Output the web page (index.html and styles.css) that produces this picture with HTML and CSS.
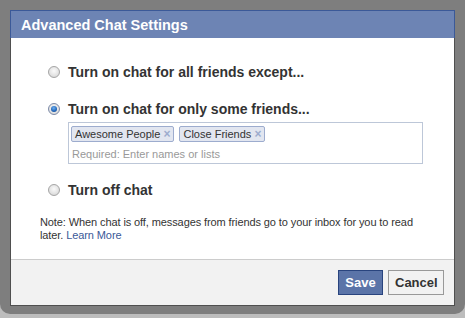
FILE: index.html
```html
<!DOCTYPE html>
<html lang="en">
<head>
    <meta charset="UTF-8">
    <title>Advanced Chat Settings</title>
    <link rel="stylesheet" href="styles.css">
</head>
<body>
    <div class="frame">
        <div class="dialog">
            <div class="dialog-header">Advanced Chat Settings</div>
            <div class="dialog-body">
                <div class="option">
                    <span class="radio"></span>
                    <span class="option-label">Turn on chat for all friends except...</span>
                </div>
                <div class="option option-selected">
                    <span class="radio radio-on"></span>
                    <span class="option-label">Turn on chat for only some friends...</span>
                </div>
                <div class="token-box">
                    <div class="tokens">
                        <span class="token">Awesome People <span class="token-x">&#215;</span></span>
                        <span class="token">Close Friends <span class="token-x">&#215;</span></span>
                    </div>
                    <div class="token-input">Required: Enter names or lists</div>
                </div>
                <div class="option option-last">
                    <span class="radio"></span>
                    <span class="option-label">Turn off chat</span>
                </div>
                <p class="note">Note: When chat is off, messages from friends go to your inbox for you to read later. <a href="#">Learn More</a></p>
            </div>
            <div class="dialog-footer">
                <button class="btn btn-save">Save</button>
                <button class="btn btn-cancel">Cancel</button>
            </div>
        </div>
    </div>
</body>
</html>
```

FILE: styles.css
```css
body {
    margin: 0;
    padding: 0;
    background-color: #bdbdbd;
    font-family: "Liberation Sans", Arial, sans-serif;
    color: #333;
}
.frame {
    width: 465px;
    height: 314px;
    box-sizing: border-box;
    padding: 10px 10px 8px 10px;
    background-color: #7e7e7e;
    border-radius: 0 0 10px 10px;
}
.dialog {
    background: white;
    border: 1px solid #4f4f4f;
    border-top: 0;
    width: 445px;
    height: 296px;
    box-sizing: border-box;
    display: flex;
    flex-direction: column;
}
.dialog-header {
    background-color: #6d84b4;
    border: 1px solid #3b5998;
    border-bottom: 0;
    margin: 0 -1px;
    height: 28px;
    box-sizing: border-box;
    padding: 6px 10px 0 10px;
    color: white;
    font-weight: bold;
    font-size: 14.5px;
}
.dialog-body {
    flex: 1;
    padding: 27px 10px 0 29px;
}
.option {
    display: flex;
    align-items: center;
    height: 14px;
    padding-left: 8px;
    margin-bottom: 23px;
}
.option-selected {
    margin-bottom: 6px;
}
.option-last {
    margin-top: 19px;
    margin-bottom: 19px;
}
.radio {
    width: 10px;
    height: 10px;
    border-radius: 50%;
    border: 1px solid #a5a5a5;
    background: radial-gradient(circle at 50% 40%, #fafafa 0, #e4e4e4 55%, #cfcfcf 100%);
    margin-right: 8px;
    position: relative;
}
.radio-on {
    border-color: #7c8aa8;
}
.radio-on::after {
    content: "";
    position: absolute;
    left: 2px;
    top: 2px;
    width: 6px;
    height: 6px;
    border-radius: 50%;
    background: radial-gradient(circle at 45% 35%, #6fb0f0 0, #1f64b8 60%, #103f80 100%);
}
.option-label {
    font-weight: bold;
    font-size: 14px;
    color: #333;
}
.token-box {
    margin-left: 28px;
    width: 355px;
    height: 42px;
    box-sizing: border-box;
    border: 1px solid #bdc7d8;
    padding: 3px 2px 0 2px;
}
.tokens {
    display: flex;
    gap: 5px;
}
.token {
    background: #e2e6f0;
    border: 1px solid #9dacce;
    border-radius: 2px;
    height: 16px;
    box-sizing: border-box;
    padding: 0 3px;
    font-size: 11px;
    line-height: 14px;
    color: #333;
}
.token-x {
    color: #9dacce;
    font-weight: bold;
    font-size: 12px;
}
.token-input {
    margin-top: 6px;
    padding-left: 1px;
    font-size: 11px;
    color: #999;
}
.note {
    margin: 0;
    max-width: 378px;
    font-size: 11px;
    letter-spacing: -0.1px;
    line-height: 13px;
    color: #333;
}
.note a {
    color: #3b5998;
    text-decoration: none;
}
.dialog-footer {
    background-color: #f2f2f2;
    border-top: 1px solid #ccc;
    height: 46px;
    box-sizing: border-box;
    padding: 10px 10px 0 0;
    display: flex;
    justify-content: flex-end;
    align-items: flex-start;
    gap: 5px;
}
.btn {
    height: 25px;
    box-sizing: border-box;
    font-family: "Liberation Sans", Arial, sans-serif;
    font-weight: bold;
    font-size: 13px;
    padding: 0 6px;
    cursor: pointer;
}
.btn-save {
    background-color: #5b74a8;
    border: 1px solid #29447e;
    color: white;
    width: 45px;
}
.btn-cancel {
    background-color: #f2f2f2;
    border: 1px solid #999;
    color: #333;
    width: 56px;
}
```
